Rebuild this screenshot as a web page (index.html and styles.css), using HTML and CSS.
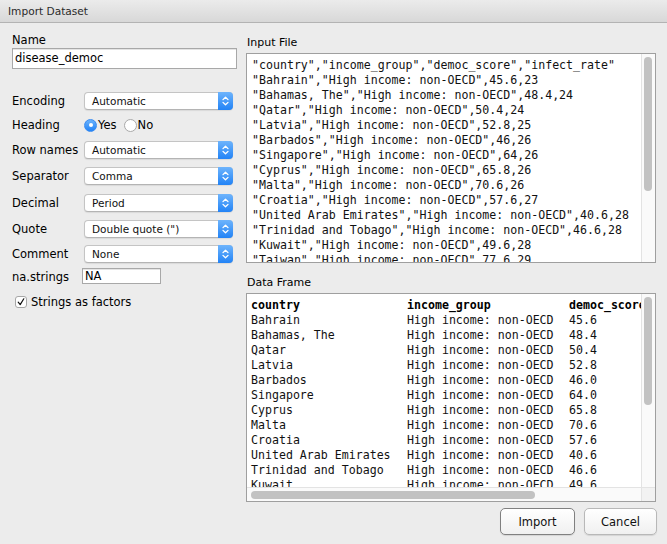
FILE: index.html
```html
<!DOCTYPE html>
<html>
<head>
<meta charset="utf-8">
<title>Import Dataset</title>
<link rel="stylesheet" href="styles.css">
</head>
<body>
<div class="titlebar">Import Dataset</div>
<div class="content">
  <div class="left">
    <div class="name-label">Name</div>
    <div class="text-input name-input">disease_democ</div>
    <div class="form">
      <span class="lbl">Encoding</span>
      <div class="select"><span class="select-text">Automatic</span><span class="stepper"><svg width="15" height="18" viewBox="0 0 15 18"><path d="M5 7.6 L7.5 5.2 L10 7.6 M5 10.4 L7.5 12.8 L10 10.4" fill="none" stroke="#fff" stroke-width="1.3" stroke-linecap="round" stroke-linejoin="round"/></svg></span></div>

      <span class="lbl">Heading</span>
      <div class="radios">
        <span class="radio on"><span class="dot"></span></span><span class="radio-text">Yes</span>
        <span class="radio"></span><span class="radio-text">No</span>
      </div>

      <span class="lbl">Row names</span>
      <div class="select"><span class="select-text">Automatic</span><span class="stepper"><svg width="15" height="18" viewBox="0 0 15 18"><path d="M5 7.6 L7.5 5.2 L10 7.6 M5 10.4 L7.5 12.8 L10 10.4" fill="none" stroke="#fff" stroke-width="1.3" stroke-linecap="round" stroke-linejoin="round"/></svg></span></div>

      <span class="lbl">Separator</span>
      <div class="select"><span class="select-text">Comma</span><span class="stepper"><svg width="15" height="18" viewBox="0 0 15 18"><path d="M5 7.6 L7.5 5.2 L10 7.6 M5 10.4 L7.5 12.8 L10 10.4" fill="none" stroke="#fff" stroke-width="1.3" stroke-linecap="round" stroke-linejoin="round"/></svg></span></div>

      <span class="lbl">Decimal</span>
      <div class="select"><span class="select-text">Period</span><span class="stepper"><svg width="15" height="18" viewBox="0 0 15 18"><path d="M5 7.6 L7.5 5.2 L10 7.6 M5 10.4 L7.5 12.8 L10 10.4" fill="none" stroke="#fff" stroke-width="1.3" stroke-linecap="round" stroke-linejoin="round"/></svg></span></div>

      <span class="lbl">Quote</span>
      <div class="select"><span class="select-text">Double quote (")</span><span class="stepper"><svg width="15" height="18" viewBox="0 0 15 18"><path d="M5 7.6 L7.5 5.2 L10 7.6 M5 10.4 L7.5 12.8 L10 10.4" fill="none" stroke="#fff" stroke-width="1.3" stroke-linecap="round" stroke-linejoin="round"/></svg></span></div>

      <span class="lbl">Comment</span>
      <div class="select"><span class="select-text">None</span><span class="stepper"><svg width="15" height="18" viewBox="0 0 15 18"><path d="M5 7.6 L7.5 5.2 L10 7.6 M5 10.4 L7.5 12.8 L10 10.4" fill="none" stroke="#fff" stroke-width="1.3" stroke-linecap="round" stroke-linejoin="round"/></svg></span></div>

      <span class="lbl">na.strings</span>
      <div class="text-input na-input">NA</div>

      <div class="check-row">
        <span class="checkbox"><svg width="10" height="10" viewBox="0 0 10 10"><path d="M2.2 5.2 L4.2 7.6 L7.8 1.8" fill="none" stroke="#111" stroke-width="1.2" stroke-linecap="round" stroke-linejoin="round"/></svg></span>
        <span class="check-text">Strings as factors</span>
      </div>
    </div>
  </div>

  <div class="right">
    <div class="panel-label">Input File</div>
    <div class="box file-box">
      <div class="file-text">"country","income_group","democ_score","infect_rate"
"Bahrain","High income: non-OECD",45.6,23
"Bahamas, The","High income: non-OECD",48.4,24
"Qatar","High income: non-OECD",50.4,24
"Latvia","High income: non-OECD",52.8,25
"Barbados","High income: non-OECD",46,26
"Singapore","High income: non-OECD",64,26
"Cyprus","High income: non-OECD",65.8,26
"Malta","High income: non-OECD",70.6,26
"Croatia","High income: non-OECD",57.6,27
"United Arab Emirates","High income: non-OECD",40.6,28
"Trinidad and Tobago","High income: non-OECD",46.6,28
"Kuwait","High income: non-OECD",49.6,28
"Taiwan","High income: non-OECD",77.6,29</div>
      <div class="vtrack"><div class="vthumb file-thumb"></div></div>
    </div>

    <div class="panel-label df-label">Data Frame</div>
    <div class="box df-box">
      <div class="df">
        <div class="df-row df-head"><span>country</span><span>income_group</span><span>democ_score</span><span>infect_rate</span></div>
        <div class="df-row"><span>Bahrain</span><span>High income: non-OECD</span><span>45.6</span><span>23</span></div>
        <div class="df-row"><span>Bahamas, The</span><span>High income: non-OECD</span><span>48.4</span><span>24</span></div>
        <div class="df-row"><span>Qatar</span><span>High income: non-OECD</span><span>50.4</span><span>24</span></div>
        <div class="df-row"><span>Latvia</span><span>High income: non-OECD</span><span>52.8</span><span>25</span></div>
        <div class="df-row"><span>Barbados</span><span>High income: non-OECD</span><span>46.0</span><span>26</span></div>
        <div class="df-row"><span>Singapore</span><span>High income: non-OECD</span><span>64.0</span><span>26</span></div>
        <div class="df-row"><span>Cyprus</span><span>High income: non-OECD</span><span>65.8</span><span>26</span></div>
        <div class="df-row"><span>Malta</span><span>High income: non-OECD</span><span>70.6</span><span>26</span></div>
        <div class="df-row"><span>Croatia</span><span>High income: non-OECD</span><span>57.6</span><span>27</span></div>
        <div class="df-row"><span>United Arab Emirates</span><span>High income: non-OECD</span><span>40.6</span><span>28</span></div>
        <div class="df-row"><span>Trinidad and Tobago</span><span>High income: non-OECD</span><span>46.6</span><span>28</span></div>
        <div class="df-row"><span>Kuwait</span><span>High income: non-OECD</span><span>49.6</span><span>28</span></div>
        <div class="df-row"><span>Taiwan</span><span>High income: non-OECD</span><span>77.6</span><span>29</span></div>
      </div>
      <div class="vtrack"><div class="vthumb df-thumb"></div></div>
      <div class="htrack"><div class="hthumb"></div></div>
      <div class="corner"></div>
    </div>
  </div>
</div>
<div class="footer">
  <button class="btn btn-default">Import</button>
  <button class="btn btn-cancel">Cancel</button>
</div>
</body>
</html>
```

FILE: styles.css
```css
* { box-sizing: border-box; }

html, body {
  margin: 0;
  padding: 0;
}

body {
  width: 667px;
  height: 544px;
  overflow: hidden;
  background: #ececec;
  font-family: "DejaVu Sans", "Open Sans", sans-serif;
  font-size: 11.5px;
  color: #000;
}

.titlebar {
  height: 23px;
  line-height: 22px;
  padding-left: 8px;
  font-size: 10.6px;
  color: #2a2a2a;
  background: linear-gradient(#ebebeb, #d8d8d8);
  border-bottom: 1px solid #b3b3b3;
}

.content {
  display: grid;
  grid-template-columns: 225px 410px;
  column-gap: 9px;
  padding: 10px 0 0 12px;
}

/* ---------- left column ---------- */
.left {
  display: flex;
  flex-direction: column;
}

.name-label {
  height: 14px;
  line-height: 14px;
}

.text-input {
  background: #fff;
  border: 1px solid #a8a8a8;
  box-shadow: inset 0 1px 0 #e4e4e4;
  white-space: nowrap;
  overflow: hidden;
}

.name-input {
  margin-top: 1px;
  height: 21px;
  line-height: 19px;
  padding-left: 2px;
}

.form {
  margin-top: 20px;
  display: grid;
  grid-template-columns: 72px 149px;
  grid-template-rows: 24px 24px 26px 26px 27px 26px 23px 24px 26px;
  align-items: center;
}

.lbl {
  line-height: 14px;
  white-space: nowrap;
}

.select {
  height: 18px;
  display: flex;
  align-items: stretch;
  background: #fff;
  border: 1px solid #c4c4c4;
  border-bottom-color: #b4b4b4;
  border-radius: 4px;
  box-shadow: 0 1px 1px rgba(0, 0, 0, 0.08);
  font-size: 10.5px;
}

.select-text {
  flex: 1;
  padding-left: 7px;
  line-height: 16px;
  color: #111;
  white-space: nowrap;
}

.stepper {
  width: 15px;
  margin: -1px -1px -1px 0;
  border-radius: 0 4px 4px 0;
  background: linear-gradient(#6eb4fc, #2283f6);
  display: flex;
  align-items: center;
  justify-content: center;
}

.stepper svg { display: block; }

.radios {
  display: flex;
  align-items: center;
  height: 14px;
}

.radio {
  width: 13px;
  height: 13px;
  border-radius: 50%;
  background: #fff;
  border: 1px solid #a9a9a9;
  display: flex;
  align-items: center;
  justify-content: center;
  flex: none;
}

.radio.on {
  background: linear-gradient(#6ab2fc, #2283f6);
  border-color: #3a8cf2;
}

.dot {
  width: 4px;
  height: 4px;
  border-radius: 50%;
  background: #fff;
}

.radio-text {
  margin: 0 7px 0 1px;
  line-height: 14px;
}

.na-input {
  width: 79px;
  height: 16px;
  margin-left: -2px;
  margin-top: -2px;
  line-height: 14px;
  padding-left: 2px;
}

.check-row {
  grid-column: 1 / 3;
  display: flex;
  align-items: center;
  padding-left: 3px;
}

.checkbox {
  width: 12px;
  height: 12px;
  border: 1px solid #a6a6a6;
  border-radius: 3px;
  background: #fff;
  display: flex;
  align-items: center;
  justify-content: center;
  flex: none;
}

.checkbox svg { display: block; }

.check-text {
  margin-left: 4px;
  line-height: 14px;
}

/* ---------- right column ---------- */
.right {
  display: flex;
  flex-direction: column;
  padding-top: 3px;
}

.panel-label {
  height: 14px;
  line-height: 14px;
  font-size: 11px;
  padding-left: 1px;
}

.df-label {
  margin-top: 13px;
}

.box {
  margin-top: 3px;
  background: #fff;
  border: 1px solid #9f9f9f;
  overflow: hidden;
  display: grid;
}

.file-box {
  height: 210px;
  grid-template-columns: 394px 14px;
}

.df-box {
  height: 209px;
  grid-template-columns: 394px 14px;
  grid-template-rows: 193px 14px;
}

.file-text,
.df {
  font-family: "DejaVu Sans Mono", "Liberation Mono", monospace;
  font-size: 11.6px;
  line-height: 15px;
  color: #111;
  overflow: hidden;
}

.file-text {
  white-space: pre;
  padding: 4px 0 0 5px;
}

.df {
  padding: 4px 0 0 4px;
}

.df-row {
  display: grid;
  grid-template-columns: 156px 162px 92px max-content;
  white-space: pre;
}

.df-head {
  font-weight: bold;
  color: #000;
}

.vtrack {
  background: #fafafa;
  border-left: 1px solid #e3e3e3;
  padding: 3px 0 0 2px;
}

.vthumb {
  width: 8px;
  border-radius: 4px;
  background: #c2c2c2;
}

.file-thumb { height: 134px; }
.df-thumb { height: 108px; }

.htrack {
  background: #fafafa;
  border-top: 1px solid #e3e3e3;
  padding: 3px 0 0 4px;
}

.hthumb {
  width: 284px;
  height: 8px;
  border-radius: 4px;
  background: #c2c2c2;
}

.corner {
  background: #f2f2f2;
  border-left: 1px solid #e3e3e3;
  border-top: 1px solid #e3e3e3;
}

/* ---------- footer ---------- */
.footer {
  display: flex;
  justify-content: flex-end;
  gap: 9px;
  padding: 6px 10px 0 0;
}

.btn {
  height: 27px;
  font-family: "DejaVu Sans", "Open Sans", sans-serif;
  font-size: 11.5px;
  color: #111;
  background: linear-gradient(#ffffff, #f0f0f0);
  border: 1px solid #b8b8b8;
  border-radius: 5px;
  box-shadow: 0 1px 1px rgba(0, 0, 0, 0.1);
  padding: 0;
}

.btn-default {
  width: 75px;
  border: 1.5px solid #808080;
}

.btn-cancel {
  width: 73px;
}
```
